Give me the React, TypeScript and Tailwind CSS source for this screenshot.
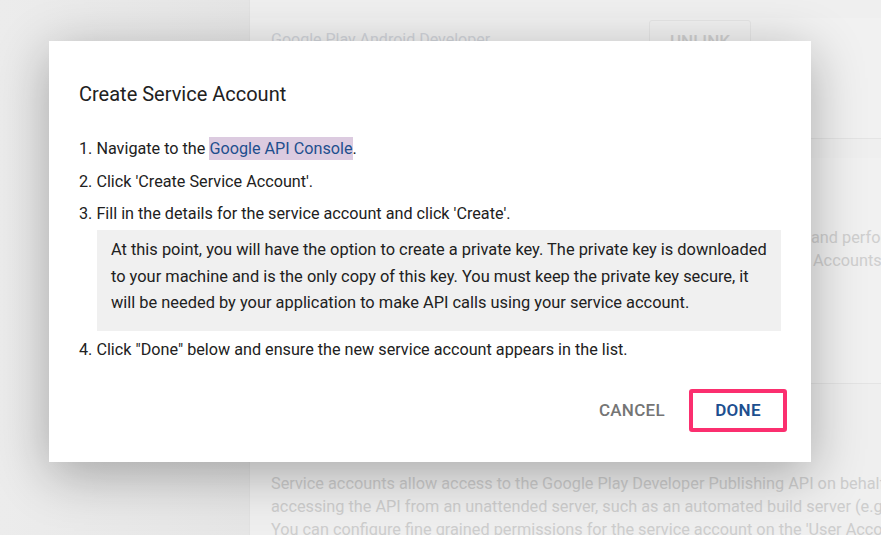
import React from 'react'

const bgLines = [
  'Service accounts allow access to the Google Play Developer Publishing API on behalf of an application rather than an end user.',
  'accessing the API from an unattended server, such as an automated build server (e.g. Jenkins). All actions will be attributed',
  "You can configure fine grained permissions for the service account on the 'User Accounts & Rights' page.",
]

export default function App() {
  return (
    <div className="relative w-[881px] h-[535px] overflow-hidden bg-[#e8e8e8] font-['Roboto',sans-serif]">
      {/* Page behind the dialog */}
      <div className="flex h-full">
        <aside className="w-[250px] shrink-0 bg-gradient-to-r from-[#ececec] to-[#e6e6e6] border-r border-[#e2e2e2]" />
        <main className="flex-1 flex flex-col bg-[#efefef] overflow-hidden">
          <div className="shrink-0 mt-[18px] h-[121px] bg-[#f1f1f1] border-b border-[#e4e4e4] flex items-start justify-between pl-[21px] pr-[130px]">
            <div className="mt-[10px] text-[16px] text-[#d2d5db] whitespace-nowrap">Google Play Android Developer</div>
            <div className="mt-[2px] w-[102px] h-[44px] border border-[#e6e6e6] rounded-[3px] flex items-center justify-center text-[17px] font-medium text-[#d0d0d0]">
              UNLINK
            </div>
          </div>
          <div className="shrink-0 mt-[19px] h-[226px] bg-[#f1f1f1] border-b border-[#e4e4e4] pl-[21px] pt-[68px] text-[16.3px] leading-[23px] text-[#cfcfcf] whitespace-nowrap">
            <div className="flex">
              <span className="w-[540px] shrink-0 overflow-hidden">Use the Google Play Developer API to publish updates, </span>
              <span>and perform other publishing tasks.</span>
            </div>
            <div className="flex">
              <span className="w-[542px] shrink-0 overflow-hidden">Grant a service account access on the 'User </span>
              <span>Accounts &amp; Rights' page.</span>
            </div>
          </div>
          <div className="shrink-0 pl-[21px] pt-[88px] text-[16.3px] leading-[23px] text-[#cdcdcd] whitespace-nowrap">
            {bgLines.map(l => (
              <div key={l}>{l}</div>
            ))}
          </div>
        </main>
      </div>

      {/* Dialog */}
      <div className="absolute left-[49px] top-[41px] w-[762px] h-[421px] bg-white shadow-[0_12px_50px_rgba(0,0,0,0.3)] flex flex-col pl-[30px] pr-[24px] pt-[41px] pb-[30px] text-[#212121]">
        <h2 className="text-[20px] leading-[24px] font-normal">Create Service Account</h2>

        <div className="mt-[32px] pr-[6px] text-[16.2px] leading-[22px]">
          <div>
            1. Navigate to the{' '}
            <a className="bg-[#dccbe0] text-[#1e4f8e] py-[2px]">Google API Console</a>.
          </div>
          <div className="mt-[11px]">2. Click 'Create Service Account'.</div>
          <div className="mt-[10px]">3. Fill in the details for the service account and click 'Create'.</div>
          <div className="mt-[5px] ml-[18px] bg-[#f0f0f0] pl-[14px] pr-[6px] pt-[7px] pb-[14px] text-[16.4px] leading-[26.5px] whitespace-nowrap">
            At this point, you will have the option to create a private key. The private key is downloaded
            <br />
            to your machine and is the only copy of this key. You must keep the private key secure, it
            <br />
            will be needed by your application to make API calls using your service account.
          </div>
          <div className="mt-[8px]">4. Click "Done" below and ensure the new service account appears in the list.</div>
        </div>

        <div className="mt-auto flex items-center justify-end gap-[24px]">
          <button className="text-[17px] font-medium text-[#757575] tracking-[0.3px]">CANCEL</button>
          <button className="w-[98px] h-[43px] border-[4px] border-[#fb2f6f] rounded-[3px] text-[17px] font-semibold text-[#1d4f8f] tracking-[0.3px]">
            DONE
          </button>
        </div>
      </div>
    </div>
  )
}
